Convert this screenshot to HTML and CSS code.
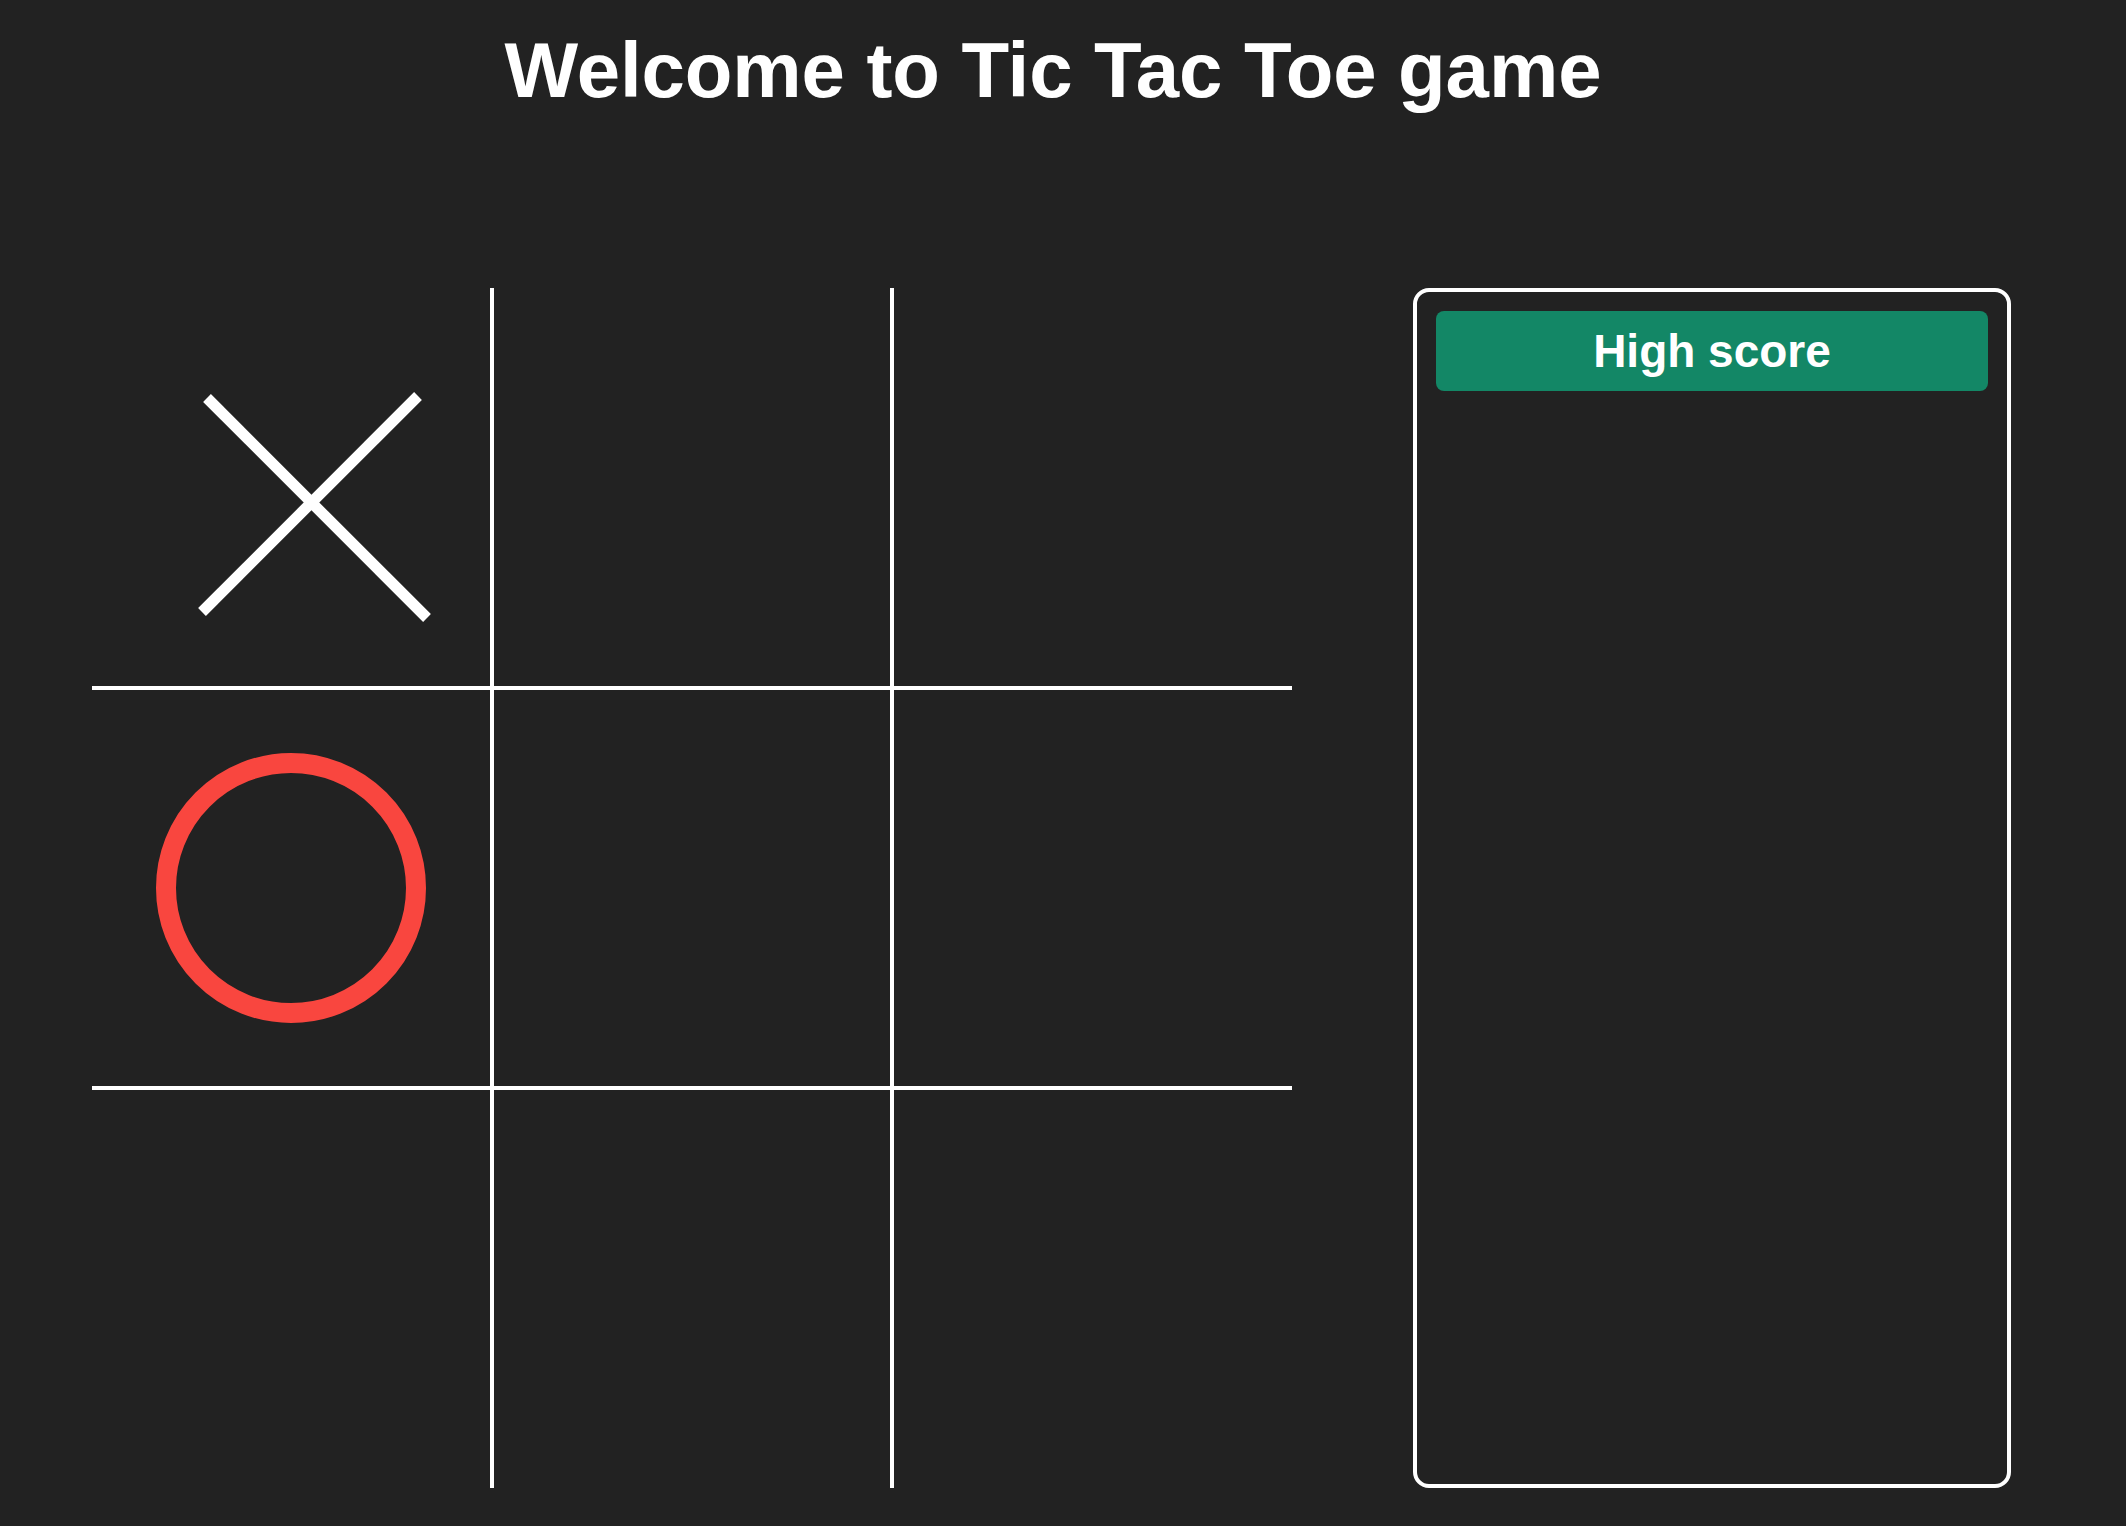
FILE: index.html
```html
<!DOCTYPE html>
<html lang="en">
<head>
<meta charset="utf-8">
<title>Tic Tac Toe</title>
<link rel="stylesheet" href="styles.css">
</head>
<body>
<h1 class="title">Welcome to Tic Tac Toe game</h1>
<main class="main">
  <div class="board">
    <div class="cell c1 r1">
      <svg class="mark-x" width="398" height="398" viewBox="0 0 398 398">
        <line x1="115" y1="110" x2="335" y2="330" />
        <line x1="326" y1="108" x2="110" y2="324" />
      </svg>
    </div>
    <div class="cell c2 r1"></div>
    <div class="cell c3 r1"></div>
    <div class="cell c1 r2"><div class="mark-o"></div></div>
    <div class="cell c2 r2"></div>
    <div class="cell c3 r2"></div>
    <div class="cell c1 r3"></div>
    <div class="cell c2 r3"></div>
    <div class="cell c3 r3"></div>
  </div>
  <aside class="panel">
    <div class="panel-head">High score</div>
  </aside>
</main>
</body>
</html>
```
FILE: styles.css
```css
html, body {
  margin: 0;
  padding: 0;
  background: #222222;
  color: #ffffff;
  font-family: "Liberation Sans", Arial, Helvetica, sans-serif;
}

.title {
  margin: 0;
  padding-top: 31px;
  padding-right: 20px;
  font-size: 78px;
  line-height: 78px;
  font-weight: 700;
  text-align: center;
  letter-spacing: -0.1px;
}

.main {
  display: flex;
  align-items: flex-start;
  margin-top: 179px;
  padding-left: 92px;
}

.board {
  display: grid;
  grid-template-columns: repeat(3, 400px);
  grid-template-rows: repeat(3, 400px);
}

.cell {
  box-sizing: border-box;
  display: flex;
  align-items: center;
  justify-content: center;
}

.c1 { border-right: 2px solid #ffffff; }
.c2 { border-left: 2px solid #ffffff; border-right: 2px solid #ffffff; }
.c3 { border-left: 2px solid #ffffff; }
.r1 { border-bottom: 2px solid #ffffff; }
.r2 { border-top: 2px solid #ffffff; border-bottom: 2px solid #ffffff; }
.r3 { border-top: 2px solid #ffffff; }

.mark-x {
  display: block;
}

.mark-x line {
  stroke: #ffffff;
  stroke-width: 11;
  stroke-linecap: butt;
}

.mark-o {
  box-sizing: border-box;
  width: 270px;
  height: 270px;
  border: 20px solid #f9463f;
  border-radius: 50%;
}

.panel {
  box-sizing: border-box;
  width: 598px;
  height: 1200px;
  margin-left: 121px;
  border: 4px solid #ffffff;
  border-radius: 16px;
  padding: 19px;
}

.panel-head {
  height: 80px;
  background: #138766;
  border-radius: 8px;
  font-size: 46px;
  font-weight: 700;
  line-height: 80px;
  text-align: center;
}
```
